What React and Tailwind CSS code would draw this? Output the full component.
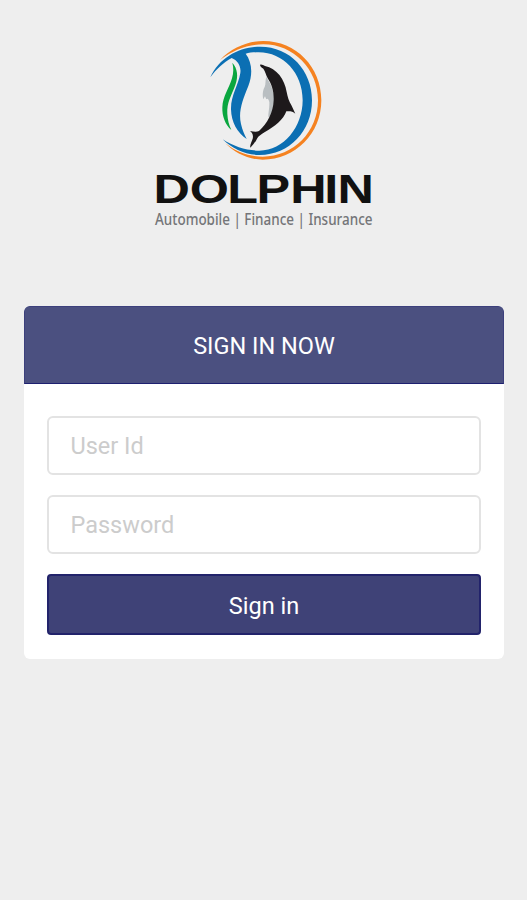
function DolphinMark() {
  return (
    <svg viewBox="0 0 390 405" className="ml-[3px] h-[135px] w-[130px]" aria-hidden="true">
      <path fill="#f58220" d="M60 84C95 47 143 27 190 27C288 27 364 105 364 205C364 304 287 383 188 383C143 383 103 361 76 334C109 360 148 374 188 374C281 374 354 299 354 205C354 111 280 37 190 37C145 37 99 54 60 84Z" />
      <path fill="#0b6fb3" d="M31 136C58 77 119 44 181 44C270 44 336 115 336 205C336 297 268 369 179 369C136 369 98 351 68 322C102 344 140 356 178 356C251 356 308 285 308 205C308 123 250 61 176 61C162 61 148 61 137 65C156 90 159 126 145 162C128 204 114 239 123 276C127 294 133 307 140 321C112 303 94 271 93 232C92 190 115 161 121 123C124 103 113 85 95 78C70 92 50 110 31 136Z" />
      <path fill="#0aa63f" d="M97 92C112 109 116 132 106 159C94 192 80 211 82 246C83 264 87 279 94 294C76 279 66 253 67 226C68 193 88 168 96 139C101 121 101 107 97 92Z" />
      <path fill="#b9bec1" d="M199 134C205 147 212 154 216 169L223 193C227 217 220 240 207 257C202 251 209 233 208 211C207 202 202 197 199 202L195 193L190 202C187 191 188 174 194 165C198 157 195 145 199 134Z" />
      <path fill="#1d191b" d="M180 99C183 95 190 100 195 102C230 109 254 142 260 180C263 195 266 207 275 221L286 245C278 237 268 237 259 238C251 262 223 285 196 299C184 306 175 312 171 320C167 329 160 338 151 347C149 339 155 329 158 320C161 309 156 302 150 297C161 299 169 301 177 297C202 275 220 241 221 205C222 176 215 157 204 140C198 130 196 118 190 110C186 107 181 105 180 99Z" />
    </svg>
  );
}

function Logo() {
  return (
    <div className="flex flex-col items-center">
      <DolphinMark />
      <svg viewBox="0 0 227 70" className="h-[70px] w-[227px] overflow-visible">
        <text x="2.8 32.6 63.3 87.4 115 142.8 153.6" y="36" transform="scale(1.22 1)" className="fill-[#111111] font-['Liberation_Sans',sans-serif] text-[41.3px] font-bold">DOLPHIN</text>
        <text x="5" y="58.3" textLength="217.5" lengthAdjust="spacingAndGlyphs" className="fill-[#747578] font-['Noto_Sans',sans-serif] text-[15.6px] font-medium">Automobile | Finance | Insurance</text>
      </svg>
    </div>
  );
}

function Field({ type, label }) {
  return (
    <input
      type={type}
      placeholder={label}
      aria-label={label}
      className="block h-[59px] w-full rounded-md border-2 border-[#e3e3e3] bg-white px-[21.5px] pt-px text-[23.5px] text-gray-700 outline-none placeholder:text-[#cccccc]"
    />
  );
}

export default function App() {
  return (
    <main className="flex min-h-[900px] flex-col bg-[#eeeeee] pt-8 font-[Roboto,sans-serif]">
      <Logo />
      <section className="mx-6 mt-[69px] h-[353px] w-[480px] overflow-hidden rounded-md bg-white">
        <h1 className="flex h-[78px] items-center justify-center rounded-t-[5px] border border-[#3c407c] border-b-[#1d2070] bg-[#4b5080] pt-[3px] text-[23.5px] text-white">SIGN IN NOW</h1>
        <form className="flex flex-col gap-5 px-[23px] pt-8">
          <Field type="text" label="User Id" />
          <Field type="password" label="Password" />
          <button type="button" className="h-[61px] rounded border-2 border-[#22236b] bg-[#3f4277] pt-[5px] text-[23.5px] text-white">Sign in</button>
        </form>
      </section>
    </main>
  );
}
